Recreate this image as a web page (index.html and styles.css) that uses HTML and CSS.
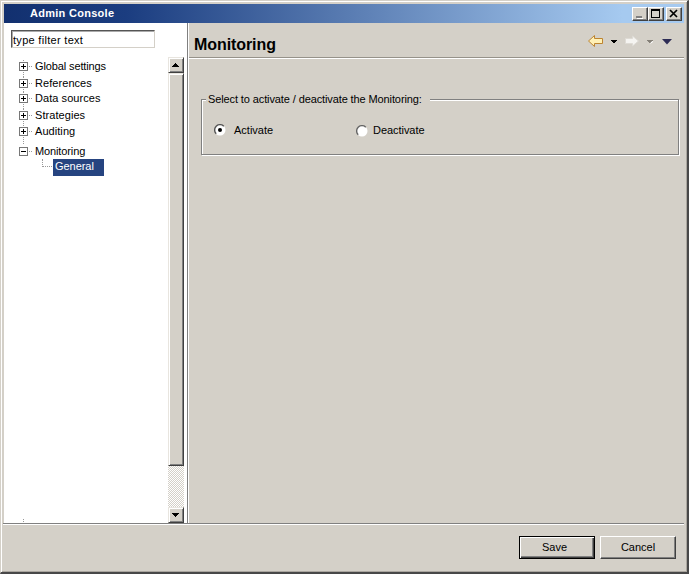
FILE: index.html
```html
<!DOCTYPE html>
<html lang="en">
<head>
<meta charset="utf-8">
<title>Admin Console</title>
<link rel="stylesheet" href="styles.css">
</head>
<body>
<div class="window">
  <header class="titlebar">
    <span class="title">Admin Console</span>
    <div class="controls">
      <button class="ctl" aria-label="Minimize"><svg width="13" height="11"><path d="M3 8h6v2H3z" fill="#808080"/><path d="M4 10h6v1H4z" fill="#fff"/></svg></button>
      <button class="ctl" aria-label="Maximize"><svg width="13" height="11"><path fill="#000" fill-rule="evenodd" d="M2 1h9v9H2zM3 3v6h7V3z"/></svg></button>
      <button class="ctl close" aria-label="Close"><svg width="13" height="11"><path d="M3 2l7 7M10 2L3 9" stroke="#000" stroke-width="1.7"/></svg></button>
    </div>
  </header>
  <div class="main">
    <aside class="side">
      <input class="filter" value="type filter text" aria-label="Filter">
      <div class="browser">
        <ul class="tree">
          <li class="node"><i class="box plus"></i><span class="tight">Global settings</span></li>
          <li class="node"><i class="box plus"></i><span>References</span></li>
          <li class="node"><i class="box plus"></i><span>Data sources</span></li>
          <li class="node"><i class="box plus"></i><span>Strategies</span></li>
          <li class="node"><i class="box plus"></i><span>Auditing</span></li>
          <li class="node"><i class="box"></i><span class="tight">Monitoring</span></li>
          <li class="leaf"><i class="elbow"></i><span class="selected">General</span></li>
        </ul>
        <div class="scrollbar">
          <div class="arrow"><svg width="12" height="12"><path d="M5 4h1v1h1v1h1v1h1v1H2V7h1V6h1V5h1z"/></svg></div>
          <div class="thumb"></div>
          <div class="track"></div>
          <div class="arrow"><svg width="12" height="12"><path d="M2 4h7v1H8v1H7v1H6v1H5V7H4V6H3V5H2z"/></svg></div>
        </div>
      </div>
    </aside>
    <section class="page">
      <div class="heading">
        <h1>Monitoring</h1>
        <svg class="nav" width="90" height="16" viewBox="0 0 90 16">
          <path d="M.500 8L6.500 2.500v3h8v5h-8v3z" fill="#fff0b5" stroke="#bd8430" stroke-linejoin="round"/>
          <path d="M23 7h6v1h-1v1h-1v1h-2V9h-1V8h-1z" fill="#000"/>
          <path d="M37.500 5.500h7V3l6 5-6 5v-2.500h-7z" fill="#f5f4f1" stroke="#dedbd5"/>
          <path d="M59 7h6v1h-1v1h-1v1h-2V9h-1V8h-1z" fill="#858078"/>
          <path d="M63 9l2-1v1l-3 2z" fill="#fff"/>
          <path d="M74 6h10l-5 5.500z" fill="#2d2c55"/>
        </svg>
      </div>
      <fieldset class="group">
        <legend><span>Select to activate / deactivate the Monitoring:</span></legend>
        <div class="choices">
          <label><svg class="radio" width="12" height="12"><circle cx="6" cy="6" r="5.500" fill="#fff"/><path d="M2.200 9.800A5.200 5.200 0 0 1 9.800 2.200" fill="none" stroke="#555" stroke-width="1.400"/><circle cx="6" cy="6" r="2" fill="#000"/></svg><span>Activate</span></label>
          <label class="second"><svg class="radio" width="12" height="12"><circle cx="6" cy="6" r="5.500" fill="#fff"/><path d="M2.200 9.800A5.200 5.200 0 0 1 9.800 2.200" fill="none" stroke="#666" stroke-width="1.400"/></svg><span>Deactivate</span></label>
        </div>
      </fieldset>
    </section>
  </div>
  <footer class="footer">
    <button class="btn default"><span>Save</span></button>
    <button class="btn"><span>Cancel</span></button>
  </footer>
</div>
</body>
</html>
```
FILE: styles.css
```css
* { box-sizing: border-box; }
body {
  margin: 0;
  overflow: hidden;
  font: 11px/13px "Liberation Sans", Arial, sans-serif;
  color: #000;
}
button, input { font: inherit; color: inherit; margin: 0; padding: 0; border-radius: 0; }
.window {
  width: 689px;
  height: 574px;
  padding: 2px 0 0 2px;
  display: flex;
  flex-direction: column;
  background: #d4d0c8;
  border: solid #d4d0c8;
  border-width: 1px 2px 2px 1px;
  border-right-color: #484848;
  border-bottom-color: #484848;
  box-shadow: inset 1px 1px #fff, inset -1px -1px #aaa69f;
}
.titlebar {
  height: 19px;
  flex: none;
  margin: 1px 3px 0 1px;
  padding: 0 2px 0 26px;
  display: flex;
  align-items: center;
  justify-content: space-between;
  background: linear-gradient(90deg, #12306f, #1b3d80 18%, #a6caf0 91%);
  color: #fff;
}
.title { font-weight: bold; letter-spacing: .28px; }
.controls { display: flex; }
.ctl {
  width: 16px;
  height: 14px;
  display: flex;
  background: #d4d0c8;
  border: 1px solid;
  border-color: #fff #404040 #404040 #fff;
  box-shadow: inset -1px -1px #808080;
}
.close { margin-left: 2px; }
.main {
  height: 500px;
  flex: none;
  display: flex;
  margin: 0 3px 0 1px;
}
.side {
  width: 183px;
  background: #fff;
  padding: 7px 0 0 7px;
}
.filter {
  display: block;
  width: 144px;
  height: 18px;
  border: 1px solid;
  border-color: #555 #d4d0c8 #d4d0c8 #555;
  box-shadow: inset 1px 1px #aaa;
  padding: 1px 1px 0;
  letter-spacing: .3px;
  outline: none;
}
.browser { display: flex; justify-content: space-between; margin-top: 9px; height: 466px; padding-right: 3px; }
.tree {
  list-style: none;
  margin: 3px 0 0 8px;
  padding: 0;
  background: repeating-linear-gradient(#999 0 1px, transparent 1px 2px) 4px 100% / 1px 4px no-repeat;
}
.node {
  height: 16px;
  display: flex;
  align-items: flex-start;
  background: repeating-linear-gradient(#999 0 1px, transparent 1px 2px) 4px 0 / 1px 100% no-repeat;
}
.node span { line-height: 13px; white-space: nowrap; letter-spacing: .06px; }
.node .tight { letter-spacing: -.12px; }
.node:first-child { height: 17px; }
.node:nth-child(2) { height: 15px; }
.node:nth-child(3) { height: 17px; }
.node:nth-child(4) { height: 16px; }
.node:nth-child(5) { height: 20px; }
.node:nth-child(6) { height: 14px; background: none; }
.box {
  width: 9px;
  height: 9px;
  margin: 2px 7px 0 0;
  border: 1px solid #777;
  background: linear-gradient(#000, #000) 1px 3px / 5px 1px no-repeat, #fff;
  box-shadow: 0 0 0 1px #fff;
}
.plus {
  background: linear-gradient(#000, #000) 1px 3px / 5px 1px no-repeat, linear-gradient(#000, #000) 3px 1px / 1px 5px no-repeat, #fff;
}
.box::after { content: ""; display: block; width: 3px; margin: 3px 0 0 9px; border-top: 1px dotted #999; }
.leaf { display: flex; padding-left: 23px; }
.elbow { width: 10px; height: 8px; margin-right: 1px; border: dotted #999; border-width: 0 0 1px 1px; }
.selected { width: 51px; height: 17px; padding: 1px 0 0 2px; background: #264480; color: #fff; letter-spacing: -.05px; }
.scrollbar { width: 16px; display: flex; flex-direction: column; }
.arrow, .thumb {
  background: #d4d0c8;
  border: 1px solid;
  border-color: #e8e5df #404040 #404040 #e8e5df;
  box-shadow: inset 1px 1px #fff, inset -1px -1px #808080;
}
.arrow { height: 16px; padding: 1px; flex: none; }
.arrow svg { display: block; }
.thumb { height: 393px; }
.track { flex: 1; background: repeating-conic-gradient(#d4d0c8 0 25%, #fff 0 50%) 0 0 / 2px 2px; }
.page { flex: 1; border-left: 1px solid #808080; box-shadow: inset 1px 0 #fff; padding: 0 0 0 1px; }
.heading {
  height: 36px;
  padding: 0 6px 0 5px;
  display: flex;
  justify-content: space-between;
  border-bottom: 1px solid #fff;
  box-shadow: inset 0 -1px #96928a;
}
h1 { margin: 12px 0 0; font: bold 16px/20px "Liberation Sans", Arial, sans-serif; letter-spacing: -.08px; }
.nav { margin-top: 10px; }
.group {
  width: 478px;
  height: 63px;
  margin: 33px 0 0 12px;
  padding: 0;
  border: 1px solid #808080;
  box-shadow: 1px 1px #fff, inset 1px 1px #fff;
}
.group legend {
  height: 14px;
  margin-left: 4px;
  padding: 1px 8px 0 2px;
  background: #d4d0c8;
  letter-spacing: -.11px;
  white-space: nowrap;
}
.choices {
  display: grid;
  grid-template-columns: 142px 1fr;
  height: 48px;
  padding: 18px 0 0 12px;
}
.choices label { display: flex; }
.choices .second { letter-spacing: -.05px; }
.radio { margin-right: 8px; }
.second .radio { margin: 1px 5px 0 0; }
.footer {
  flex: 1;
  margin-right: 3px;
  border-top: 1px solid #808080;
  box-shadow: inset 0 1px #fff;
  display: flex;
  justify-content: flex-end;
  gap: 5px;
  padding: 12px 8px 0 0;
}
.btn {
  width: 76px;
  height: 23px;
  background: #d4d0c8;
  border: 1px solid;
  border-color: #fff #404040 #404040 #fff;
  box-shadow: inset -1px -1px #808080;
}
.default { padding-right: 5px; border-color: #000; box-shadow: inset 1px 1px #fff, inset -1px -1px #404040, inset -2px -2px #808080; }
```
